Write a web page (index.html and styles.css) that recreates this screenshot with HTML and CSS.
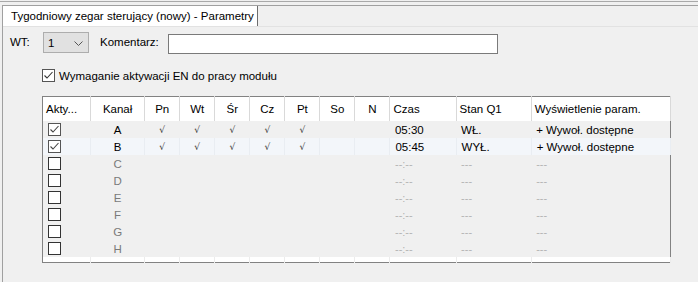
FILE: index.html
```html
<!DOCTYPE html>
<html lang="pl">
<head>
<meta charset="utf-8">
<title>Tygodniowy zegar sterujący</title>
<link rel="stylesheet" href="styles.css">
</head>
<body>
<div class="frame">
  <div class="panel">
    <div class="tabstrip">
      <div class="tab">Tygodniowy zegar sterujący (nowy) - Parametry</div>
    </div>
    <div class="content">
      <div class="row-top">
        <span class="lbl wt">WT:</span>
        <div class="combo">
          <span>1</span>
          <svg class="chev" width="9" height="5" viewBox="0 0 9 5"><polyline points="0.5,0.5 4.5,4.5 8.5,0.5" fill="none" stroke="#555" stroke-width="1"/></svg>
        </div>
        <span class="lbl komentarz">Komentarz:</span>
        <div class="input"></div>
      </div>
      <div class="row-check">
        <span class="cb checked"><svg width="13" height="13" viewBox="0 0 13 13"><polyline points="2.5,6.5 5,9 10.5,3" fill="none" stroke="#333" stroke-width="1.1"/></svg></span>
        <span class="cblabel">Wymaganie aktywacji EN do pracy modułu</span>
      </div>
      <table class="grid">
        <colgroup>
          <col class="c-akt"><col class="c-kan">
          <col class="c-day"><col class="c-day"><col class="c-day"><col class="c-day"><col class="c-day"><col class="c-day"><col class="c-day">
          <col class="c-czas"><col class="c-stan"><col class="c-wys">
        </colgroup>
        <thead>
          <tr>
            <th class="l">Akty...</th><th>Kanał</th><th>Pn</th><th>Wt</th><th>Śr</th><th>Cz</th><th>Pt</th><th>So</th><th>N</th>
            <th class="l">Czas</th><th class="l">Stan Q1</th><th class="l">Wyświetlenie param.</th>
          </tr>
        </thead>
        <tbody>
          <tr class="on">
            <td><span class="cb checked"><svg width="13" height="13" viewBox="0 0 13 13"><polyline points="2.5,6.5 5,9 10.5,3" fill="none" stroke="#444" stroke-width="1.1"/></svg></span></td>
            <td class="c">A</td><td class="c ck">√</td><td class="c ck">√</td><td class="c ck">√</td><td class="c ck">√</td><td class="c ck">√</td><td></td><td></td>
            <td class="t">05:30</td><td class="s">WŁ.</td><td class="w">+ Wywoł. dostępne</td>
          </tr>
          <tr class="on alt">
            <td><span class="cb checked"><svg width="13" height="13" viewBox="0 0 13 13"><polyline points="2.5,6.5 5,9 10.5,3" fill="none" stroke="#444" stroke-width="1.1"/></svg></span></td>
            <td class="c">B</td><td class="c ck">√</td><td class="c ck">√</td><td class="c ck">√</td><td class="c ck">√</td><td class="c ck">√</td><td></td><td></td>
            <td class="t">05:45</td><td class="s">WYŁ.</td><td class="w">+ Wywoł. dostępne</td>
          </tr>
          <tr class="off">
            <td><span class="cb"></span></td><td class="c">C</td><td></td><td></td><td></td><td></td><td></td><td></td><td></td>
            <td class="t dash">--:--</td><td class="s dash">---</td><td class="w dash">---</td>
          </tr>
          <tr class="off">
            <td><span class="cb"></span></td><td class="c">D</td><td></td><td></td><td></td><td></td><td></td><td></td><td></td>
            <td class="t dash">--:--</td><td class="s dash">---</td><td class="w dash">---</td>
          </tr>
          <tr class="off">
            <td><span class="cb"></span></td><td class="c">E</td><td></td><td></td><td></td><td></td><td></td><td></td><td></td>
            <td class="t dash">--:--</td><td class="s dash">---</td><td class="w dash">---</td>
          </tr>
          <tr class="off">
            <td><span class="cb"></span></td><td class="c">F</td><td></td><td></td><td></td><td></td><td></td><td></td><td></td>
            <td class="t dash">--:--</td><td class="s dash">---</td><td class="w dash">---</td>
          </tr>
          <tr class="off">
            <td><span class="cb"></span></td><td class="c">G</td><td></td><td></td><td></td><td></td><td></td><td></td><td></td>
            <td class="t dash">--:--</td><td class="s dash">---</td><td class="w dash">---</td>
          </tr>
          <tr class="off">
            <td><span class="cb"></span></td><td class="c">H</td><td></td><td></td><td></td><td></td><td></td><td></td><td></td>
            <td class="t dash">--:--</td><td class="s dash">---</td><td class="w dash">---</td>
          </tr>
          <tr class="filler">
            <td></td><td></td><td></td><td></td><td></td><td></td><td></td><td></td><td></td><td></td><td></td><td></td>
          </tr>
        </tbody>
      </table>
    </div>
  </div>
</div>
</body>
</html>
```
FILE: styles.css
```css
* { box-sizing: border-box; }
html, body {
  margin: 0;
  padding: 0;
  width: 698px;
  height: 282px;
  overflow: hidden;
  background: #f0f0f0;
  font-family: "Liberation Sans", Arial, sans-serif;
  font-size: 11.5px;
  color: #000;
}
.frame {
  margin-top: 1px;
  border-top: 1px solid #a9a9a9;
  padding-top: 3px;
  height: 281px;
}
.panel {
  margin-left: 2px;
  border-left: 1px solid #a0a0a0;
  border-top: 1px solid #a0a0a0;
  height: 278px;
}
.tabstrip {
  height: 21px;
  border-bottom: 1px solid #e2e2e2;
  display: flex;
}
.tab {
  width: 255px;
  height: 20px;
  background: #fff;
  border-right: 1px solid #6d6d6d;
  padding-left: 8px;
  line-height: 20px;
  white-space: nowrap;
}
.content {
  padding-left: 7px;
}
.row-top {
  display: flex;
  align-items: flex-start;
  margin-top: 5px;
  height: 22px;
}
.lbl {
  line-height: 20px;
  flex: none;
}
.lbl.wt { width: 33px; }
.combo {
  width: 46px;
  height: 21px;
  flex: none;
  background: #e1e1e1;
  border: 1px solid #adadad;
  display: flex;
  align-items: center;
  justify-content: space-between;
  padding: 0 5px 0 4px;
}
.combo span { line-height: 19px; padding-top: 1px; }
.chev { margin-top: 1px; }
.komentarz {
  margin-left: 11px;
  width: 68px;
}
.input {
  margin-top: 2px;
  width: 330px;
  height: 20px;
  background: #fff;
  border: 1px solid #7a7a7a;
}
.row-check {
  display: flex;
  align-items: center;
  margin-top: 14px;
  margin-left: 32px;
  height: 14px;
}
.cb {
  display: inline-block;
  width: 13px;
  height: 13px;
  border: 1px solid #333;
  background: #fff;
  position: relative;
  vertical-align: middle;
}
.cb svg {
  position: absolute;
  left: -1px;
  top: -1px;
}
.cb.checked { border-color: #555; }
.cblabel {
  margin-left: 4px;
  padding-top: 1px;
}
.grid {
  margin-top: 14px;
  margin-left: 32px;
  border-collapse: collapse;
  table-layout: fixed;
  width: 629px;
  border: 1px solid #828282;
  background: #fff;
}
.c-akt { width: 48px; }
.c-kan { width: 54px; }
.c-day { width: 35px; }
.c-czas { width: 66px; }
.c-stan { width: 75px; }
.c-wys { width: 139px; }
.grid th {
  height: 24px;
  padding: 1px 0 0;
  font-weight: normal;
  text-align: center;
  border-right: 1px solid #d9d9d9;
  background: #fff;
  white-space: nowrap;
}
.grid th.l { text-align: left; padding-left: 3px; }
.grid td {
  height: 17px;
  padding: 1px 0 0;
  white-space: nowrap;
  line-height: 16px;
}
.grid tbody tr { background: #f0f0f0; }
.grid tbody tr.alt { background: #f3f6fa; }
.grid tr.alt td { border-right: 1px solid #e9edf2; }
.grid td:first-child { padding: 0 0 0 5px; line-height: 0; }
.grid td.c { text-align: center; }
.grid td.ck { font-family: "DejaVu Sans", sans-serif; font-size: 9px; color: #333; }
.grid td.t { padding-left: 5px; }
.grid td.s { padding-left: 5px; }
.grid td.w { padding-left: 5px; }
.grid tr.off td { color: #7a7a7a; }
.grid tr.off td.dash { color: #b4b4b4; font-size: 11px; }
.grid tr.filler { background: #fff; }
.grid tr.filler td {
  height: 6px;
  padding: 0;
  line-height: 6px;
  border-right: 1px solid #ececec;
}
```
